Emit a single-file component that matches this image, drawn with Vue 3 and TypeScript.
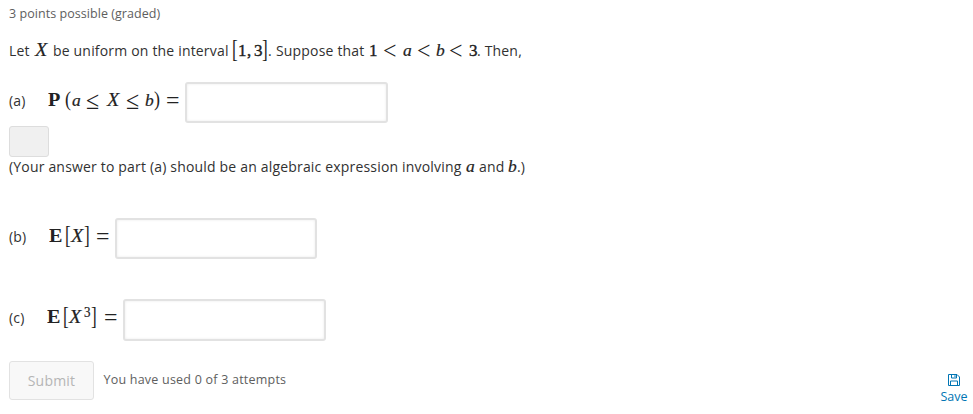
<script setup lang="ts">
interface Run {
  t: string
  k: string
  w: number
}

const intro: Run[] = [
  { t: 'Let', k: 'txt', w: 26 },
  { t: 'X', k: 'var', w: 18 },
  { t: 'be uniform on the interval', k: 'txt', w: 179 },
  { t: '[', k: 'br', w: 6 },
  { t: '1', k: 'num', w: 9 },
  { t: ',', k: 'num', w: 7 },
  { t: '3', k: 'num', w: 8 },
  { t: ']', k: 'br', w: 6 },
  { t: '.', k: 'txt', w: 8 },
  { t: 'Suppose that', k: 'txt', w: 93 },
  { t: '1', k: 'num', w: 14 },
  { t: '<', k: 'rel', w: 20 },
  { t: 'a', k: 'low', w: 14 },
  { t: '<', k: 'rel', w: 19 },
  { t: 'b', k: 'low', w: 13 },
  { t: '<', k: 'rel', w: 20 },
  { t: '3', k: 'num', w: 8 },
  { t: '. Then,', k: 'txt', w: 50 },
]
const partA: Run[] = [
  { t: '(a)', k: 'txt', w: 39 },
  { t: 'P', k: 'bold', w: 17 },
  { t: '(', k: 'par', w: 7 },
  { t: 'a', k: 'low', w: 14 },
  { t: '≤', k: 'rel', w: 21 },
  { t: 'X', k: 'var', w: 19 },
  { t: '≤', k: 'rel', w: 19 },
  { t: 'b', k: 'low', w: 9 },
  { t: ')', k: 'par', w: 12 },
  { t: '=', k: 'rel', w: 19 },
]
const note: Run[] = [
  { t: '(Your answer to part (a) should be an algebraic expression involving', k: 'txt', w: 457 },
  { t: 'a', k: 'low', w: 13 },
  { t: 'and', k: 'txt', w: 29 },
  { t: 'b', k: 'low', w: 9 },
  { t: '.)', k: 'txt', w: 12 },
]
const partB: Run[] = [
  { t: '(b)', k: 'txt', w: 40 },
  { t: 'E', k: 'bold', w: 16 },
  { t: '[', k: 'br', w: 6 },
  { t: 'X', k: 'var', w: 13 },
  { t: ']', k: 'br', w: 12 },
  { t: '=', k: 'rel', w: 19 },
]
const partC: Run[] = [
  { t: '(c)', k: 'txt', w: 38 },
  { t: 'E', k: 'bold', w: 16 },
  { t: '[', k: 'br', w: 6 },
  { t: 'X', k: 'var', w: 15 },
  { t: '3', k: 'sup', w: 7 },
  { t: ']', k: 'br', w: 13 },
  { t: '=', k: 'rel', w: 19 },
]
</script>

<template>
  <main class="problem">
    <p class="points">3 points possible (graded)</p>
    <p class="line intro">
      <span v-for="(r, i) in intro" :key="i" :class="r.k" :style="{ width: r.w + 'px' }">{{ r.t }}</span>
    </p>
    <div class="answer a">
      <p class="line">
        <span v-for="(r, i) in partA" :key="i" :class="r.k" :style="{ width: r.w + 'px' }">{{ r.t }}</span>
      </p>
      <input type="text" class="field" aria-label="a" />
    </div>
    <div class="preview"></div>
    <p class="line note">
      <span v-for="(r, i) in note" :key="i" :class="r.k" :style="{ width: r.w + 'px' }">{{ r.t }}</span>
    </p>
    <div class="answer b">
      <p class="line">
        <span v-for="(r, i) in partB" :key="i" :class="r.k" :style="{ width: r.w + 'px' }">{{ r.t }}</span>
      </p>
      <input type="text" class="field" aria-label="b" />
    </div>
    <div class="answer c">
      <p class="line">
        <span v-for="(r, i) in partC" :key="i" :class="r.k" :style="{ width: r.w + 'px' }">{{ r.t }}</span>
      </p>
      <input type="text" class="field" aria-label="c" />
    </div>
    <footer class="actions">
      <button class="submit" disabled>Submit</button>
      <span class="attempts">You have used 0 of 3 attempts</span>
      <button class="save">
        <svg width="12" height="12" viewBox="0 0 12 12" fill="none" stroke="#0075b4" stroke-width="1">
          <path d="M.5.5H9L11.500 3V11.500H.5Z" />
          <path d="M3.500.5V4H8.500V.5M7 1.200V3.200M2.500 11.500V7H9.500V11.500" />
        </svg>
        <span>Save</span>
      </button>
    </footer>
  </main>
</template>

<style>
body {
  background: #fff;
}
</style>

<style scoped>
.problem {
  box-sizing: border-box;
  width: 973px;
  height: 414px;
  padding: 4px 0 0 9px;
  overflow: hidden;
  font-family: 'Open Sans', sans-serif;
  font-size: 14px;
  color: #313131;
}
p {
  margin: 0;
}
.points {
  height: 20px;
  line-height: 20px;
  font-size: 12.5px;
  letter-spacing: 0.05px;
  color: #5e5e5e;
}
.line {
  display: flex;
  align-items: baseline;
  height: 24px;
  line-height: 24px;
  white-space: nowrap;
}
.line span {
  flex: none;
  transform-origin: 0 70%;
}
.txt {
  letter-spacing: 0.18px;
}
.intro {
  margin-top: 13px;
}
.var,
.low,
.num,
.bold,
.br,
.par,
.rel,
.sup {
  font-family: 'Liberation Serif', serif;
  color: #222;
}
.var,
.low {
  font-size: 18px;
  font-style: italic;
  -webkit-text-stroke: 0.2px #222;
}
.var {
  transform: scaleX(1.12);
}
.low {
  font-size: 17.5px;
}
.num {
  font-size: 17px;
  -webkit-text-stroke: 0.4px #222;
}
.bold {
  font-size: 18px;
  font-weight: bold;
  transform: scaleX(1.12);
}
.br {
  font-size: 22px;
  transform: translateY(1px) scale(0.78, 1.12);
}
.par {
  font-size: 20px;
  transform: scaleX(0.9);
}
.rel {
  font-size: 23px;
  transform: translateY(3px) scale(1.04, 1.1);
}
.sup {
  font-size: 13px;
  -webkit-text-stroke: 0.2px #222;
  transform: translateY(-6px) scaleY(1.15);
}
.answer {
  display: flex;
  align-items: center;
  height: 41px;
}
.answer .line {
  margin-bottom: 8px;
}
.a {
  margin-top: 21px;
}
.b,
.c {
  margin-top: 40px;
}
.field {
  box-sizing: border-box;
  width: 203px;
  height: 41px;
  margin: 0;
  padding: 0 8px;
  border: 2px solid #e2e2e2;
  border-radius: 3px;
  outline: none;
  background: #fff;
  box-shadow: inset 0 0 3px rgba(0, 0, 0, 0.08);
}
.b .field {
  width: 202px;
}
.c,
.c .field {
  height: 42px;
}
.preview {
  box-sizing: border-box;
  width: 40px;
  height: 31px;
  margin-top: 3px;
  border: 1px solid #ddd;
  border-radius: 3px;
  background: #f0f0f0;
}
.note {
  margin-top: -3px;
}
.actions {
  display: flex;
  align-items: flex-start;
  margin-top: 20px;
}
button {
  margin: 0;
  padding: 0;
  font-family: inherit;
}
.submit {
  box-sizing: border-box;
  width: 85px;
  height: 39px;
  border: 1px solid #e2e2e2;
  border-radius: 3px;
  background: #f8f8f8;
  color: #b5b5b5;
  font-size: 14px;
  letter-spacing: 0.2px;
}
.attempts {
  margin: 9px 0 0 9.5px;
  line-height: 20px;
  font-size: 12.5px;
  letter-spacing: 0.22px;
  color: #5e5e5e;
}
.save {
  display: flex;
  flex-direction: column;
  align-items: center;
  width: 30px;
  margin: 13px 4px 0 auto;
  border: 0;
  background: none;
  color: #0075b4;
  font-size: 12.5px;
  line-height: 22px;
}
</style>
